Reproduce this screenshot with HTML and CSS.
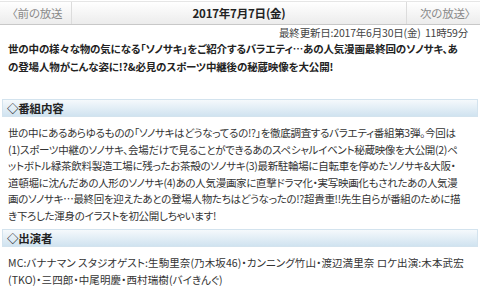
FILE: index.html
```html
<!DOCTYPE html>
<html lang="ja">

<head>
  <meta charset="UTF-8">
  <title>番組詳細</title>
  <link rel="stylesheet" href="styles.css">
</head>

<body>
  <div class="pager">
    <a class="pager-prev" href="#">〈前の放送</a>
    <div class="pager-date">2017年7月7日(金)</div>
    <a class="pager-next" href="#">次の放送〉</a>
  </div>

  <div class="content">
    <p class="updated">最終更新日:2017年6月30日(金)&nbsp;&nbsp;11時59分</p>

    <p class="lead">世の中の様々な物の気になる「ソノサキ」をご紹介するバラエティ…あの人気漫画最終回のソノサキ、あ<br>の登場人物がこんな姿に!?&amp;必見のスポーツ中継後の秘蔵映像を大公開!</p>

    <h2 class="section-title">◇番組内容</h2>
    <p class="section-text">世の中にあるあらゆるものの「ソノサキはどうなってるの!?」を徹底調査するバラエティ番組第3弾。今回は<br>(1)スポーツ中継のソノサキ、会場だけで見ることができるあのスペシャルイベント秘蔵映像を大公開(2)ペ<br>ットボトル緑茶飲料製造工場に残ったお茶殻のソノサキ(3)最新駐輪場に自転車を停めたソノサキ&amp;大阪・<br>道頓堀に沈んだあの人形のソノサキ(4)あの人気漫画家に直撃ドラマ化・実写映画化もされたあの人気漫<br>画のソノサキ…最終回を迎えたあとの登場人物たちはどうなったの!?超貴重!!先生自らが番組のために描<br>き下ろした渾身のイラストを初公開しちゃいます!</p>

    <h2 class="section-title">◇出演者</h2>
    <p class="section-text cast">MC:バナナマン スタジオゲスト:生駒里奈(乃木坂46)・カンニング竹山・渡辺満里奈 ロケ出演:木本武宏<br>(TKO)・三四郎・中尾明慶・西村瑞樹(バイきんぐ)</p>
  </div>
</body>

</html>
```

FILE: styles.css
```css
body {
  margin: 0;
  background: #fff;
  color: #333;
  font-family: "Noto Sans CJK JP", sans-serif;
  font-size: 10.5px;
  font-feature-settings: "palt";
  letter-spacing: -0.2px;
}

.pager {
  display: flex;
  align-items: center;
  height: 22px;
  margin-top: 1px;
  border-top: 1px solid #e6e6e6;
  border-bottom: 1px solid #c8c8c8;
  background: linear-gradient(#ffffff, #ececec);
}

.pager a {
  color: #8a8a8a;
  text-decoration: none;
  font-size: 11.5px;
  line-height: 22px;
}

.pager-prev {
  width: 72px;
  padding-left: 12px;
  box-sizing: border-box;
  border-right: 1px solid #dcdcdc;
}

.pager-next {
  width: 74px;
  padding-left: 13px;
  box-sizing: border-box;
  border-left: 1px solid #dcdcdc;
}

.pager-date {
  flex: 1;
  text-align: center;
  font-size: 11.5px;
  font-weight: bold;
  color: #222;
}

.content {
  padding: 0 2px;
}

.updated {
  margin: 1px 10px 0 0;
  line-height: 14px;
  text-align: right;
  color: #444;
}

.lead {
  margin: 0 6px 23px;
  font-weight: bold;
  letter-spacing: -0.15px;
  line-height: 18px;
  white-space: nowrap;
  color: #222;
}

.section-title {
  margin: 0;
  padding: 0 4px;
  height: 16px;
  line-height: 16px;
  font-size: 11.5px;
  font-weight: bold;
  color: #222;
  border: 1px solid #d3e3ee;
  background: linear-gradient(#f5f9fc, #d0e3f0);
}

.section-text {
  margin: 8px 6px 5px;
  line-height: 16.5px;
  letter-spacing: -0.3px;
  white-space: nowrap;
}

.cast {
  letter-spacing: 0.1px;
}
```
